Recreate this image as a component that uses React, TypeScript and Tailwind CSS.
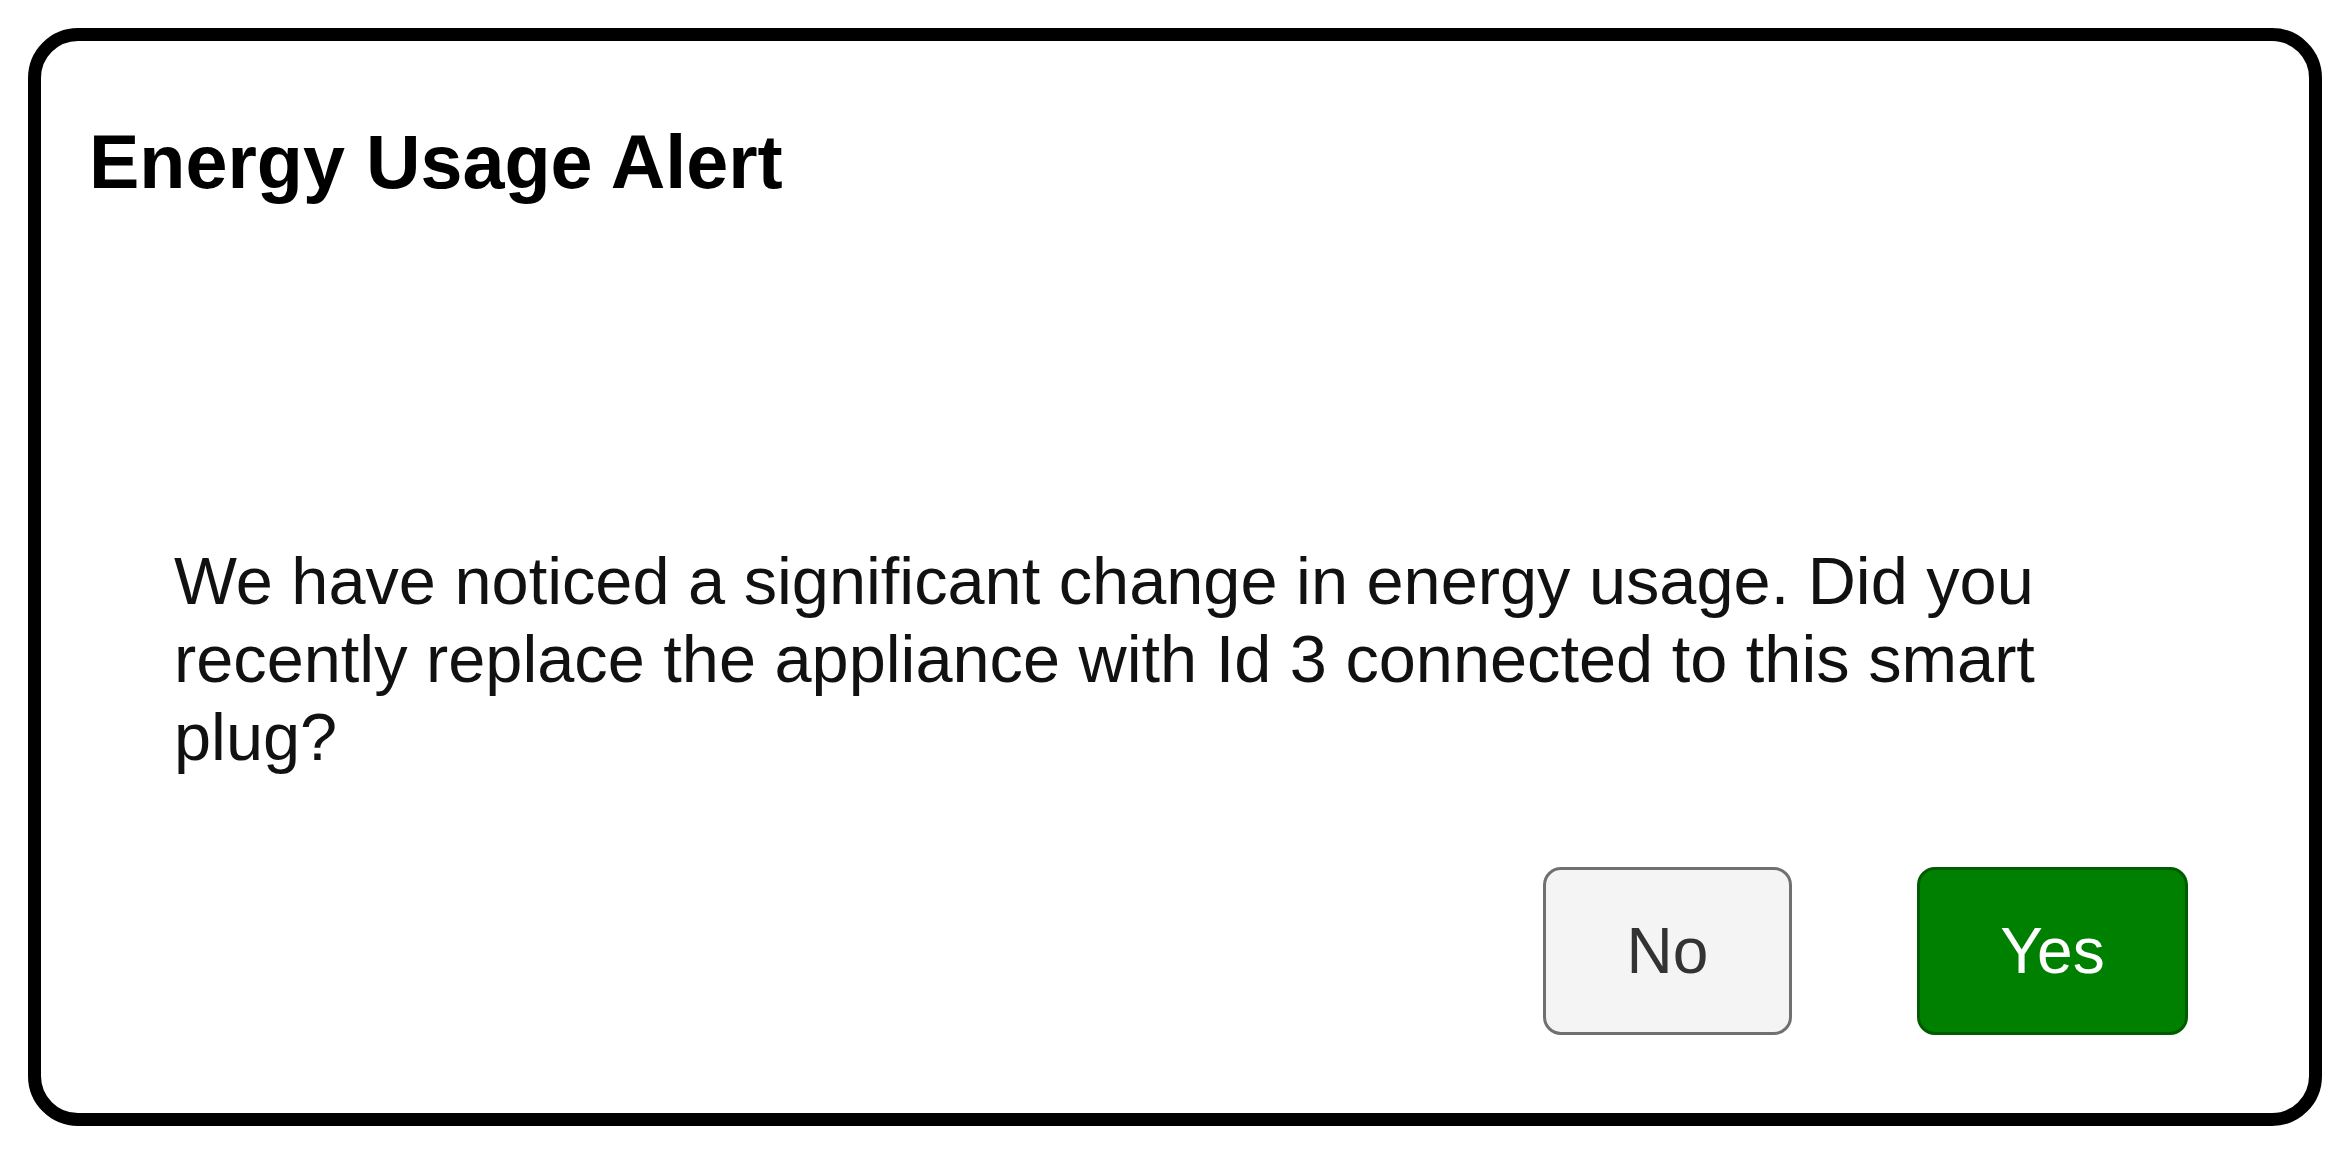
import React from "react";

export default function App() {
  return (
    <div
      className="w-[2349px] h-[1149px] bg-white pt-[28px] pl-[28px]"
      style={{ fontFamily: '"Liberation Sans", Arial, sans-serif' }}
    >
      <div className="w-[2294px] h-[1098px] border-[13px] border-black rounded-[50px] bg-white flex flex-col">
        <h1 className="pt-[78px] pl-[48px] text-[75.5px] leading-[86px] font-bold text-black">
          Energy Usage Alert
        </h1>
        <p className="mt-[337px] ml-[133px] w-[2000px] text-[66.7px] leading-[78px] text-[#111111]">
          We have noticed a significant change in energy usage. Did you recently replace the appliance with Id 3 connected to this smart plug?
        </p>
        <div className="mt-[91px] pr-[121px] flex justify-end gap-[125px]">
          <button className="w-[249px] h-[168px] rounded-[18px] border-[3px] border-[#707070] bg-[#f4f4f4] text-[#333333] text-[64px] flex items-center justify-center">
            No
          </button>
          <button className="w-[271px] h-[168px] rounded-[18px] border-[3px] border-[#005c00] bg-[#008000] text-white text-[64px] flex items-center justify-center">
            Yes
          </button>
        </div>
      </div>
    </div>
  );
}
